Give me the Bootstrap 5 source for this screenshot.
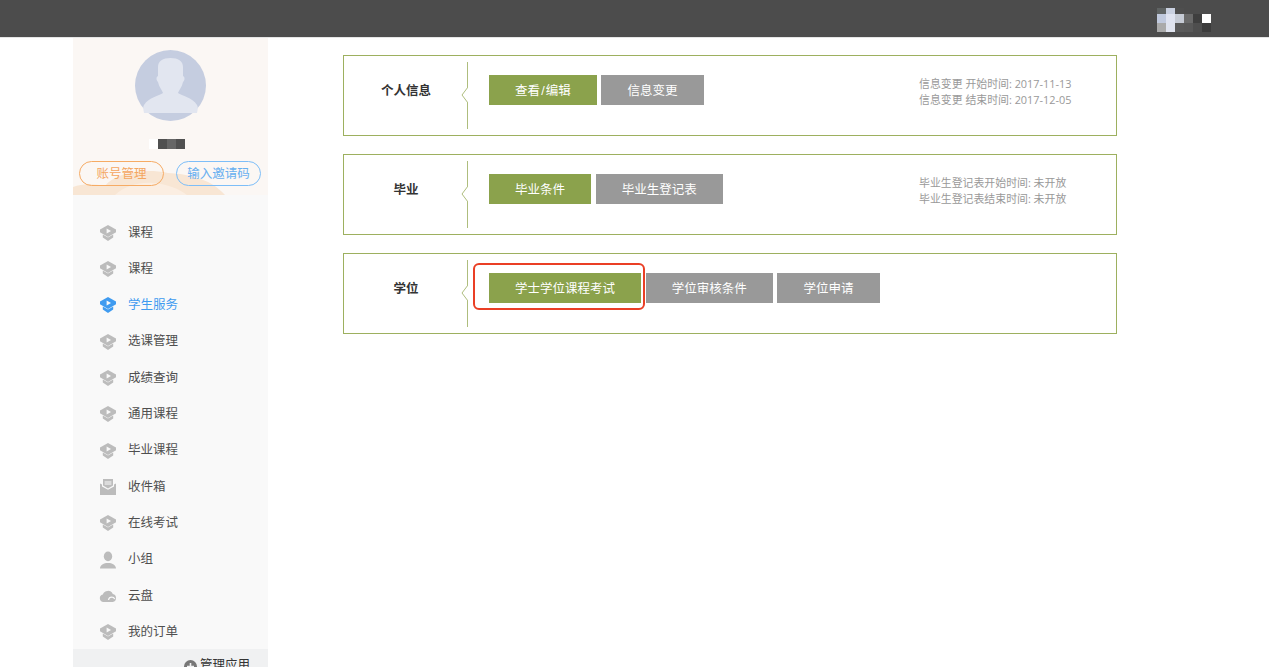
<!DOCTYPE html>
<html lang="zh">
<head>
<meta charset="utf-8">
<title>学生服务</title>
<link href="https://cdn.jsdelivr.net/npm/bootstrap@5.3.0/dist/css/bootstrap.min.css" rel="stylesheet">
<style>
html,body{height:667px;overflow:hidden;background:#fff;}
body{font-family:"Liberation Sans","Noto Sans CJK SC",sans-serif;font-size:12.5px;color:#4a4a4a;}
.topstrip{height:38px;background:#4c4c4c;border-bottom:1px solid #e4e4e4;padding:8px 58px 0 0;}
.blur-grid{display:grid;}
.blur-top{grid-template-columns:repeat(6,9px);grid-template-rows:6px 9px 9px;}
.blur-name{grid-template-columns:repeat(4,9px);grid-template-rows:10px;margin-top:18px;padding-right:7px;}
.side-panel{width:195px;height:629px;background:#f9f9f9;margin-left:73px;flex:none;overflow:hidden;}
.side-head{height:157px;background:#fbf7f4;padding-top:12px;overflow:hidden;}
.side-hills{position:absolute;left:0;bottom:0;}
.face{width:71px;height:71px;display:block;}
.pill-btn{width:85px;height:25px;border-radius:13px;background:transparent;border:1px solid;font-size:12.5px;line-height:25px;padding:0;text-align:center;}
.pill-orange{border-color:#f6ab64;color:#f4a660;}
.pill-blue{border-color:#7dbef8;color:#68b0f0;}
.pill-row{padding:0 7px 0 6px;margin-top:12px;}
.menu-entry{height:36.3px;padding-left:26px;color:#4f4f4f;line-height:1;gap:11px;}
.menu-entry svg{width:18px;height:18px;flex:none;}
.menu-entry.on{color:#3f9bf0;}
.menu-list{padding-top:19.700px;}
.side-foot{height:40px;background:#f0f1f2;padding:7px 18px 0 0;color:#333;margin-top:-1.500px;line-height:19px;gap:3px;}
.side-foot svg{width:13px;height:13px;margin-top:4px;}
.content-col{width:774px;margin-left:75px;padding-top:17px;}
.info-box{height:81px;border:1px solid #9db05f;margin-bottom:18px;}
.box-title{width:123px;height:100%;padding:27px 0 0 1px;text-align:center;font-weight:700;color:#333;font-size:12.5px;line-height:17px;}
.box-sep{width:1px;height:67px;margin-top:6px;background:#aebd7d;}
.box-notch{position:absolute;left:-6px;top:25px;width:7px;height:16px;}
.box-btns{margin-left:21px;margin-top:19px;gap:4.500px;}
.act-btn{height:30px;padding:0 26.100px;border:0;border-radius:0;color:#fff;font-size:12.5px;line-height:32px;white-space:nowrap;}
.act-green{background:#8ba24c;}
.act-grey{background:#999;}
.slash-mark{margin:0 1.100px;}
.box-note{margin-left:auto;padding-top:20px;width:197px;font-family:"Open Sans","Noto Sans CJK SC",sans-serif;font-size:10.9px;line-height:15.5px;color:#999;}
.ring-mark{position:absolute;left:-16px;top:-10px;width:172px;height:47px;border:2px solid #ea3f25;border-radius:6px;pointer-events:none;}
</style>
</head>
<body>
<div class="topstrip d-flex justify-content-end">
  <div class="blur-grid blur-top" aria-hidden="true">
    <i style="background:#5f6363"></i><i style="background:#c9d0e0"></i><i style="background:#4e4e4e"></i><i style="background:#4c4c4c"></i><i style="background:#4c4c4c"></i><i style="background:#4c4c4c"></i>
    <i style="background:#c0c9dd"></i><i style="background:#dfe3f0"></i><i style="background:#c6cbd5"></i><i style="background:#6a6a6a"></i><i style="background:#3f3f3f"></i><i style="background:#fff"></i>
    <i style="background:#aaa"></i><i style="background:#dfe3ee"></i><i style="background:#5a5a5a"></i><i style="background:#585858"></i><i style="background:#4e4e4e"></i><i style="background:#3c3c3c"></i>
  </div>
</div>
<svg width="0" height="0" class="position-absolute">
  <defs>
    <symbol id="cap" viewBox="0 0 18 18"><path d="M9 1 17 5.600V8.200L9 13 1 8.200V5.600Z" fill="currentColor"/><path d="M3.800 10.400 9 13.400l5.200-3v3L9 17 3.800 13.400Z" fill="currentColor"/><path d="M7.600 4.400 12 7 7.600 9.600Z" fill="#f9f9f9"/></symbol>
    <symbol id="mail" viewBox="0 0 18 18"><path d="M4 1h10v6.600L9 10.400 4 7.600Z" fill="currentColor"/><path d="M5.600 3.400h6.800v1H5.600zM5.600 5.600h6.800v1H5.600z" fill="#f9f9f9"/><path d="M1 5.400 3 6.600v1.800L9 11.700l6-3.300V6.600l2-1.200V17H1Z" fill="currentColor"/></symbol>
    <symbol id="user" viewBox="0 0 18 18"><ellipse cx="9" cy="5.400" rx="4.200" ry="4.800" fill="currentColor"/><path d="M1 17.500c0-3.800 4.200-5 6-5.600h4c1.800.6 6 1.800 6 5.600Z" fill="currentColor"/></symbol>
    <symbol id="cloud" viewBox="0 0 18 18"><path d="M4.500 15A3.800 3.800 0 0 1 3.800 7.500 5.400 5.400 0 0 1 13.800 7a4.100 4.100 0 0 1 0 8Z" fill="currentColor"/><path d="M9.500 13c.3-1.800 1.700-2.800 3.300-2.800s2.400.8 2.900 1.800" fill="none" stroke="#f9f9f9" stroke-width="1.300"/></symbol>
  </defs>
</svg>
<div class="d-flex">
  <aside class="side-panel">
    <div class="side-head position-relative">
      <svg class="side-hills" width="195" height="30" viewBox="0 0 195 30" aria-hidden="true"><path d="M0 30V22C10 18 22 19 32 21 42 8 70 3 95 8 112 9 136 12 152 30Z" fill="#f8e6d4"/><path d="M42 30C52 21 66 17 80 18 95 19 106 24 114 30Z" fill="#fbeee2"/></svg>
      <div class="position-relative">
        <svg class="face mx-auto" viewBox="0 0 71 71" aria-hidden="true">
          <circle cx="35.500" cy="35.500" r="35.500" fill="#c5cde0"/>
          <path d="M23 17c0-6 5-9 12.500-9S48 11 48 17v9c2 1 2 4 0 6-1 5-4 8-5 11 4 3 14 4 19 12 1 2 1 3 0 8H9c-1-5-1-6 0-8 5-8 15-9 19-12-1-3-4-6-5-11-2-2-2-5 0-6Z" fill="#e2e6f0"/>
        </svg>
        <div class="blur-grid blur-name justify-content-center" aria-hidden="true">
          <i style="background:#fff"></i><i style="background:#505050"></i><i style="background:#666"></i><i style="background:#505050"></i>
        </div>
        <div class="pill-row d-flex justify-content-between">
          <button type="button" class="btn pill-btn pill-orange">账号管理</button>
          <button type="button" class="btn pill-btn pill-blue">输入邀请码</button>
        </div>
      </div>
    </div>
    <nav class="menu-list">
      <a class="menu-entry d-flex align-items-center text-decoration-none"><svg style="color:#bcbcbc"><use href="#cap"/></svg>课程</a>
      <a class="menu-entry d-flex align-items-center text-decoration-none"><svg style="color:#bcbcbc"><use href="#cap"/></svg>课程</a>
      <a class="menu-entry on d-flex align-items-center text-decoration-none"><svg style="color:#3f9bf0"><use href="#cap"/></svg>学生服务</a>
      <a class="menu-entry d-flex align-items-center text-decoration-none"><svg style="color:#bcbcbc"><use href="#cap"/></svg>选课管理</a>
      <a class="menu-entry d-flex align-items-center text-decoration-none"><svg style="color:#bcbcbc"><use href="#cap"/></svg>成绩查询</a>
      <a class="menu-entry d-flex align-items-center text-decoration-none"><svg style="color:#bcbcbc"><use href="#cap"/></svg>通用课程</a>
      <a class="menu-entry d-flex align-items-center text-decoration-none"><svg style="color:#bcbcbc"><use href="#cap"/></svg>毕业课程</a>
      <a class="menu-entry d-flex align-items-center text-decoration-none"><svg style="color:#bcbcbc"><use href="#mail"/></svg>收件箱</a>
      <a class="menu-entry d-flex align-items-center text-decoration-none"><svg style="color:#bcbcbc"><use href="#cap"/></svg>在线考试</a>
      <a class="menu-entry d-flex align-items-center text-decoration-none"><svg style="color:#bcbcbc"><use href="#user"/></svg>小组</a>
      <a class="menu-entry d-flex align-items-center text-decoration-none"><svg style="color:#bcbcbc"><use href="#cloud"/></svg>云盘</a>
      <a class="menu-entry d-flex align-items-center text-decoration-none"><svg style="color:#bcbcbc"><use href="#cap"/></svg>我的订单</a>
    </nav>
    <div class="side-foot d-flex justify-content-end">
      <svg viewBox="0 0 13 13" aria-hidden="true"><circle cx="6.500" cy="6.500" r="6.500" fill="#777"/><path d="M6.500 3v7M3 6.500h7" stroke="#f0f1f2" stroke-width="1.600"/></svg>
      <span>管理应用</span>
    </div>
  </aside>
  <main class="content-col">
    <section class="info-box d-flex">
      <div class="box-title">个人信息</div>
      <div class="box-sep position-relative"><svg class="box-notch" viewBox="0 0 7 16" aria-hidden="true"><path d="M7 0 1 8l6 8" fill="#fff" stroke="#aebd7d"/></svg></div>
      <div class="box-btns d-flex align-items-start">
        <button type="button" class="btn act-btn act-green">查看<span class="slash-mark">/</span>编辑</button>
        <button type="button" class="btn act-btn act-grey">信息变更</button>
      </div>
      <div class="box-note">信息变更 开始时间: 2017-11-13<br>信息变更 结束时间: 2017-12-05</div>
    </section>
    <section class="info-box d-flex">
      <div class="box-title">毕业</div>
      <div class="box-sep position-relative"><svg class="box-notch" viewBox="0 0 7 16" aria-hidden="true"><path d="M7 0 1 8l6 8" fill="#fff" stroke="#aebd7d"/></svg></div>
      <div class="box-btns d-flex align-items-start">
        <button type="button" class="btn act-btn act-green">毕业条件</button>
        <button type="button" class="btn act-btn act-grey">毕业生登记表</button>
      </div>
      <div class="box-note">毕业生登记表开始时间: 未开放<br>毕业生登记表结束时间: 未开放</div>
    </section>
    <section class="info-box d-flex">
      <div class="box-title">学位</div>
      <div class="box-sep position-relative"><svg class="box-notch" viewBox="0 0 7 16" aria-hidden="true"><path d="M7 0 1 8l6 8" fill="#fff" stroke="#aebd7d"/></svg></div>
      <div class="box-btns d-flex align-items-start position-relative">
        <button type="button" class="btn act-btn act-green">学士学位课程考试</button>
        <button type="button" class="btn act-btn act-grey">学位审核条件</button>
        <button type="button" class="btn act-btn act-grey">学位申请</button>
        <div class="ring-mark"></div>
      </div>
    </section>
  </main>
</div>
</body>
</html>
